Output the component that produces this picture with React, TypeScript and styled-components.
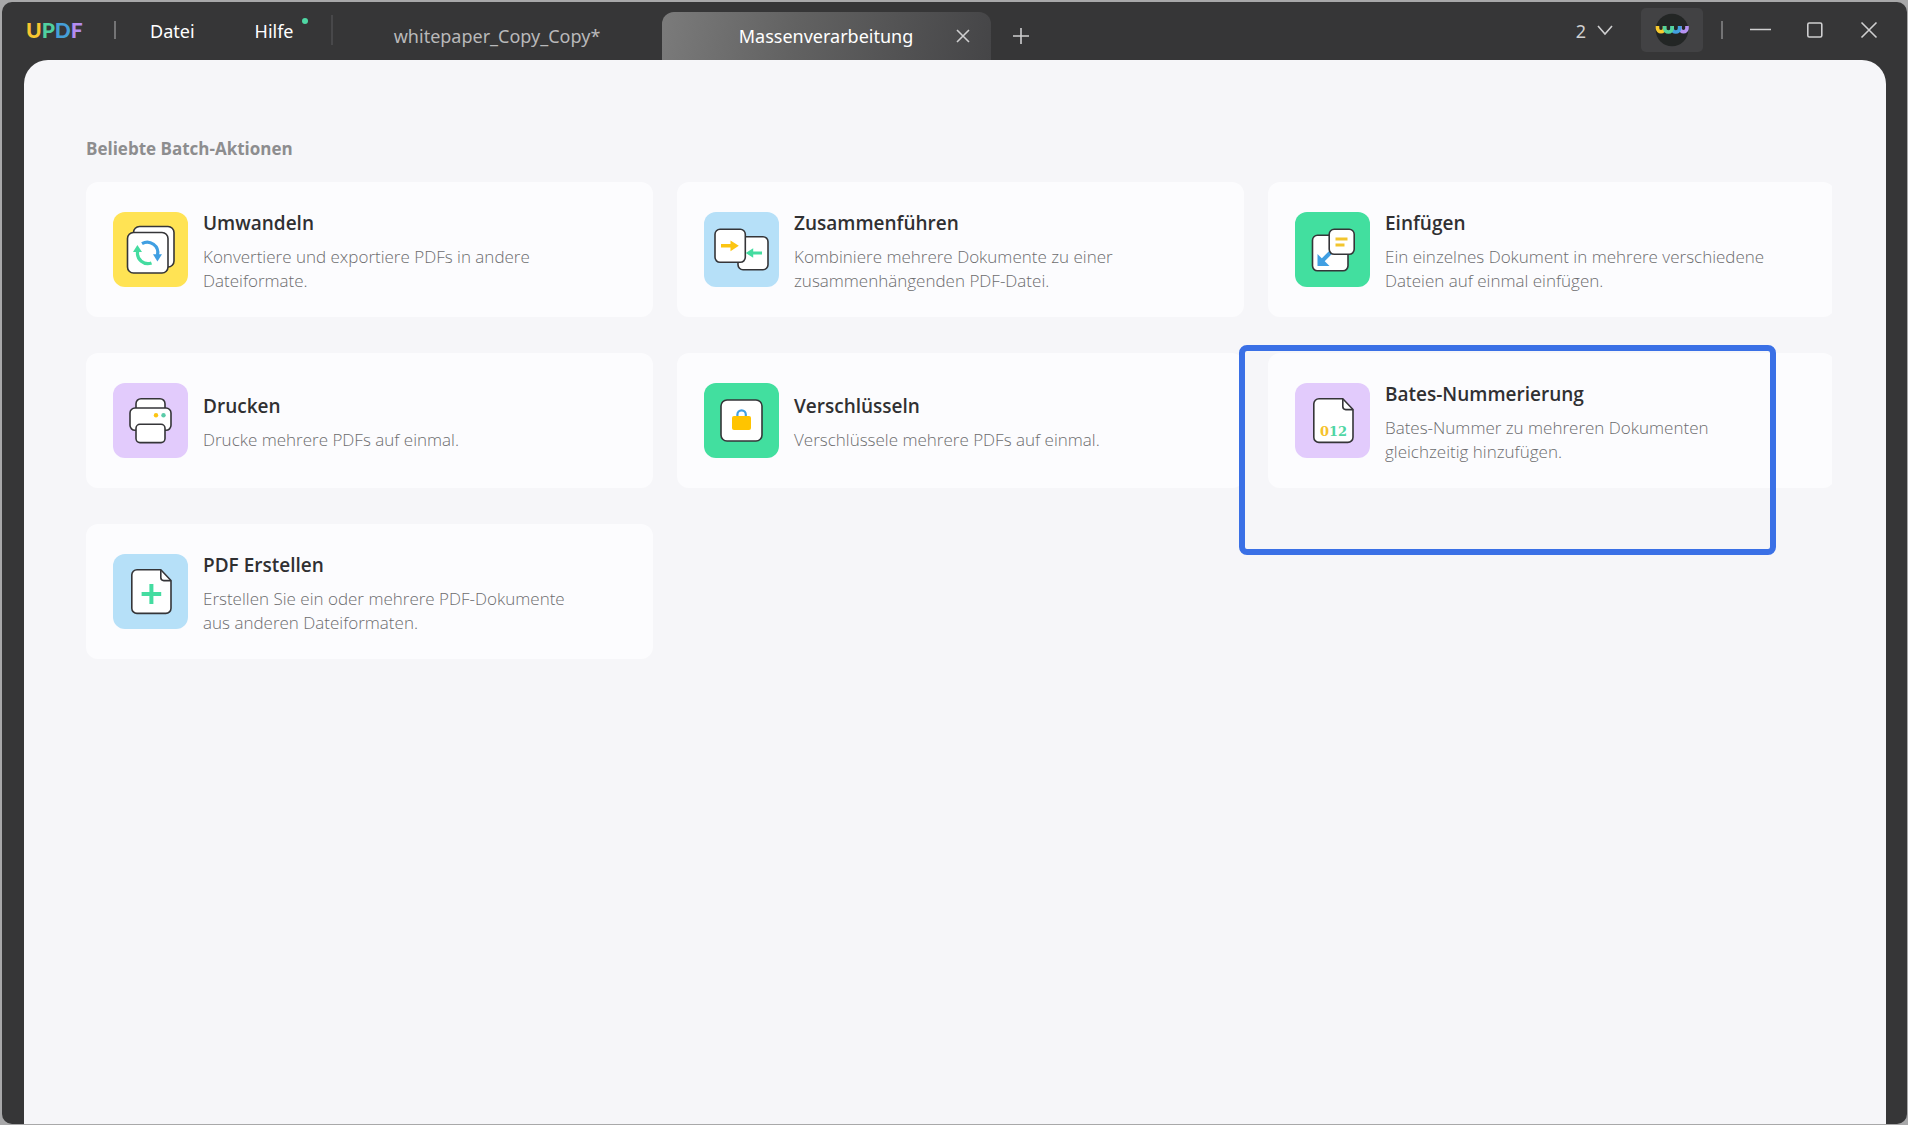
import React from "react";
import styled, { createGlobalStyle } from "styled-components";

const ink = "#353538";
const yellow = "#fcc512";
const green = "#44dca0";
const blue = "#409fe2";

const GlobalStyle = createGlobalStyle`
  *, *::before, *::after { box-sizing: border-box; }
  html, body, #root { height: 100%; }
  body {
    margin: 0;
    background: #a8a8a9;
    font-family: "Open Sans", "Noto Sans", sans-serif;
    overflow: hidden;
  }
  button { font: inherit; color: inherit; border: 0; background: none; padding: 0; cursor: pointer; }
  svg { display: block; }
`;

const Desktop = styled.div`
  height: 100%;
  padding: 2px 1px 1px 2px;
`;

const Window = styled.div`
  height: 100%;
  display: flex;
  flex-direction: column;
  background: #363637;
  border-radius: 10px;
  overflow: hidden;
`;

const TitleBar = styled.header`
  height: 58px;
  flex: none;
  display: flex;
  align-items: stretch;
  justify-content: space-between;
  color: #fff;
  font-family: "Noto Sans", "Open Sans", sans-serif;
`;

const BarGroup = styled.div`
  display: flex;
  align-items: stretch;
`;

const Logo = styled.div`
  width: 112px;
  padding-left: 24px;
  font: 900 21px/56px Lato, sans-serif;
`;

const LogoLetter = styled.span<{ $color: string }>`
  color: ${(p) => p.$color};
`;

const Divider = styled.span<{ $height: number; $color: string }>`
  width: 2px;
  height: ${(p) => p.$height}px;
  margin-top: ${(p) => (56 - p.$height) / 2}px;
  background: ${(p) => p.$color};
`;

const Menu = styled.nav`
  display: flex;
  padding: 0 37px 0 34px;
  gap: 60px;
`;

const MenuItem = styled.button`
  position: relative;
  height: 58px;
  font-size: 18px;
  line-height: 24px;
`;

const NewDot = styled.span`
  position: absolute;
  top: 16px;
  right: -14px;
  width: 6px;
  height: 6px;
  border-radius: 50%;
  background: #4fd8a4;
`;

const Tabs = styled.div`
  display: flex;
  align-items: flex-end;
`;

const Tab = styled.div<{ $active?: boolean }>`
  width: 329px;
  height: 48px;
  display: flex;
  align-items: center;
  justify-content: center;
  position: relative;
  border-radius: 12px 12px 0 0;
  background: ${(p) => (p.$active ? "linear-gradient(100deg, #7b7b7b, #626262 40%, #454547)" : "none")};
  color: ${(p) => (p.$active ? "#fff" : "#b9b9ba")};
`;

const TabLabel = styled.button`
  font-size: 18px;
  line-height: 24px;
`;

const TabClose = styled.button`
  position: absolute;
  right: 20px;
  top: 16px;
`;

const NewTab = styled.button`
  width: 60px;
  height: 48px;
  display: grid;
  place-items: center;
`;

const CountButton = styled.button`
  display: flex;
  align-items: center;
  gap: 11px;
  margin-right: 28px;
  font-size: 18px;
  color: #d0d0d1;
`;

const AccountButton = styled.button`
  width: 62px;
  height: 44px;
  margin: 6px 18px 0 0;
  display: grid;
  place-items: center;
  border-radius: 5px;
  background: #424244;
`;

const WindowButtons = styled.div`
  display: flex;
  align-items: center;
  padding: 0 11px 2px;
`;

const WindowButton = styled.button`
  width: 54px;
  height: 40px;
  display: grid;
  place-items: center;
`;

const Content = styled.main`
  flex: 1;
  min-height: 0;
  margin: 0 21px 0 22px;
  padding: 77px 54px 0 62px;
  background: #f6f6f9;
  border-radius: 24px 24px 0 0;
  overflow: hidden;
`;

const SectionTitle = styled.h1`
  margin: 0 0 21px;
  font-size: 17px;
  line-height: 24px;
  font-weight: 700;
  color: #8d8d8f;
`;

const GridViewport = styled.div`
  overflow-x: clip;
`;

const CardGrid = styled.div`
  display: grid;
  grid-template-columns: repeat(3, minmax(0, 1fr));
  gap: 36px 24px;
  margin-right: -3px;
`;

const CardCell = styled.div`
  position: relative;
`;

const Card = styled.button`
  width: 100%;
  min-height: 135px;
  display: flex;
  align-items: center;
  gap: 15px;
  padding: 0 60px 0 27px;
  border-radius: 12px;
  background: #fcfcfe;
  text-align: left;
`;

const IconTile = styled.span<{ $color: string }>`
  flex: none;
  width: 75px;
  height: 75px;
  border-radius: 12px;
  background: ${(p) => p.$color};
`;

const CardText = styled.span`
  display: flex;
  flex-direction: column;
  gap: 10px;
  padding-top: 4px;
`;

const CardTitle = styled.span`
  font-size: 19px;
  line-height: 24px;
  font-weight: 600;
  color: #303032;
`;

const CardDescription = styled.span`
  font-size: 17px;
  line-height: 24px;
  font-weight: 300;
  color: #6c6c6e;
`;

const Highlight = styled.span`
  position: absolute;
  left: -29px;
  top: -8px;
  width: calc(100% - 30px);
  height: 210px;
  border: 6px solid #3a70e6;
  border-radius: 8px;
  pointer-events: none;
`;

const sheet = { fill: "#fff", stroke: ink, strokeWidth: 1.6 };

const Art = ({ children }: { children: React.ReactNode }) => (
  <svg width="75" height="75" viewBox="0 0 75 75" aria-hidden="true">{children}</svg>
);

const ConvertIcon = () => (
  <Art>
    <rect x="20.5" y="14.5" width="40.5" height="40.5" rx="6" {...sheet} />
    <rect x="14.5" y="20.5" width="40.5" height="40.5" rx="6" {...sheet} />
    <path d="M29 31.6A10.5 10.5 0 0 1 44.5 43" fill="none" stroke={blue} strokeWidth="3.2" />
    <path d="M40 42.2h9L44.4 49.5z" fill={blue} />
    <path d="M24.6 39.5A10.5 10.5 0 0 0 38.5 51" fill="none" stroke={green} strokeWidth="3.2" />
    <path d="M20 40h9L24.4 33z" fill={green} />
  </Art>
);

const MergeIcon = () => (
  <Art>
    <rect x="34" y="24.7" width="30" height="33" rx="5" {...sheet} />
    <rect x="11" y="17.3" width="30.3" height="33" rx="5" {...sheet} />
    <path d="M17 32h9.5v-3.6l8.3 5.4-8.3 5.4v-3.6H17z" fill={yellow} />
    <path d="M58 39.4h-8.8v-3.2L41.7 41l7.5 4.8v-3.2H58z" fill={green} />
  </Art>
);

const InsertIcon = () => (
  <Art>
    <rect x="17.5" y="23.3" width="35.5" height="35.5" rx="5" {...sheet} />
    <path d="M37 39L26 50" stroke={blue} strokeWidth="4" />
    <path d="M22.5 42v12h12z" fill={blue} />
    <rect x="34.2" y="17.3" width="25" height="25" rx="5" {...sheet} />
    <path d="M40.5 27h12M40.5 33h9" stroke="#f2c52e" strokeWidth="3" />
  </Art>
);

const PrintIcon = () => (
  <Art>
    <rect x="23" y="15.7" width="29" height="18" rx="5" {...sheet} />
    <rect x="17" y="25" width="41" height="22.3" rx="5" {...sheet} />
    <rect x="23" y="41.3" width="29" height="18.3" rx="4" {...sheet} />
    <circle cx="43" cy="32.3" r="2.2" fill={yellow} />
    <circle cx="50.5" cy="32.3" r="2.2" fill="#5acba8" />
  </Art>
);

const EncryptIcon = () => (
  <Art>
    <rect x="17" y="17" width="41" height="41" rx="6" {...sheet} />
    <path d="M33.4 34v-2.4a4.2 4.2 0 0 1 8.4 0V34" fill="none" stroke={blue} strokeWidth="2.2" />
    <rect x="28" y="33" width="19" height="14" rx="2" fill="#ffc400" />
  </Art>
);

const Page = () => (
  <>
    <path d="M24 15.7h23.8L58 26.5v27.7a5.2 5.2 0 0 1-5.2 5.2H24a5.2 5.2 0 0 1-5.2-5.2V20.9a5.2 5.2 0 0 1 5.2-5.2z" {...sheet} />
    <path d="M47.8 16v7.6a3 3 0 0 0 3 3H58" fill="none" stroke={ink} strokeWidth="1.6" />
  </>
);

const BatesIcon = () => (
  <Art>
    <Page />
    <text x="25" y="53" fontFamily="'DejaVu Serif', serif" fontWeight="700" fontSize="13" fill="#f6c22c">
      0<tspan fill="#4fd6a4">12</tspan>
    </text>
  </Art>
);

const CreateIcon = () => (
  <Art>
    <Page />
    <path d="M38.4 30v20M28.6 40h19.6" stroke={green} strokeWidth="4" />
  </Art>
);

const cards = [
  { title: "Umwandeln", text: "Konvertiere und exportiere PDFs in andere Dateiformate.", color: "#ffe354", Icon: ConvertIcon },
  { title: "Zusammenführen", text: "Kombiniere mehrere Dokumente zu einer zusammenhängenden PDF-Datei.", color: "#b6e0f8", Icon: MergeIcon },
  { title: "Einfügen", text: "Ein einzelnes Dokument in mehrere verschiedene Dateien auf einmal einfügen.", color: "#42df9f", Icon: InsertIcon },
  { title: "Drucken", text: "Drucke mehrere PDFs auf einmal.", color: "#e2cbfc", Icon: PrintIcon },
  { title: "Verschlüsseln", text: "Verschlüssele mehrere PDFs auf einmal.", color: "#42df9f", Icon: EncryptIcon },
  { title: "Bates-Nummerierung", text: "Bates-Nummer zu mehreren Dokumenten gleichzeitig hinzufügen.", color: "#e2cbfc", Icon: BatesIcon, highlighted: true },
  { title: "PDF Erstellen", text: "Erstellen Sie ein oder mehrere PDF-Dokumente aus anderen Dateiformaten.", color: "#b6e0f8", Icon: CreateIcon },
];

const line = { fill: "none", stroke: "#cfcfd0", strokeWidth: 1.6 };

export default function App() {
  return (
    <Desktop>
      <GlobalStyle />
      <Window>
        <TitleBar>
          <BarGroup>
            <Logo>
              <LogoLetter $color="#f8c630">U</LogoLetter>
              <LogoLetter $color="#50d0a0">P</LogoLetter>
              <LogoLetter $color="#459fd8">D</LogoLetter>
              <LogoLetter $color="#b48cf0">F</LogoLetter>
            </Logo>
            <BarGroup>
              <Divider $height={18} $color="#747475" />
              <Menu>
                <MenuItem>Datei</MenuItem>
                <MenuItem>Hilfe<NewDot /></MenuItem>
              </Menu>
              <Divider $height={30} $color="#48484a" />
            </BarGroup>
            <Tabs>
              <Tab><TabLabel>whitepaper_Copy_Copy*</TabLabel></Tab>
              <Tab $active>
                <TabLabel>Massenverarbeitung</TabLabel>
                <TabClose aria-label="Tab schließen">
                  <svg width="16" height="16" viewBox="0 0 16 16"><path d="M2 2l12 12M14 2L2 14" {...line} /></svg>
                </TabClose>
              </Tab>
              <NewTab aria-label="Neuer Tab">
                <svg width="18" height="18" viewBox="0 0 18 18"><path d="M9 1v16M1 9h16" {...line} /></svg>
              </NewTab>
            </Tabs>
          </BarGroup>
          <BarGroup>
            <CountButton>
              2
              <svg width="16" height="12" viewBox="0 0 16 12"><path d="M1 1l7 8 7-8" {...line} /></svg>
            </CountButton>
            <AccountButton aria-label="Konto">
              <svg width="34" height="34" viewBox="0 0 34 34">
                <circle cx="17" cy="17" r="16.3" fill="#232625" />
                <g fill="none" strokeWidth="3.6">
                  <path d="M2.5 13v2.2a3.4 3.4 0 0 0 7 0V13" stroke="#f8ca2e" />
                  <path d="M25 13v2.2a3.4 3.4 0 0 0 7 0V13" stroke="#b692f2" />
                  <path d="M17 13v2.2a3.8 3.8 0 0 0 7.6 0V13" stroke="#42a0e0" />
                  <path d="M9.6 13v2.2a3.8 3.8 0 0 0 7.6 0V13" stroke="#54d49c" />
                </g>
              </svg>
            </AccountButton>
            <Divider $height={18} $color="#747475" />
            <WindowButtons>
              <WindowButton aria-label="Minimieren">
                <svg width="22" height="18" viewBox="0 0 22 18"><path d="M0 8.5h21" {...line} /></svg>
              </WindowButton>
              <WindowButton aria-label="Maximieren">
                <svg width="18" height="18" viewBox="0 0 18 18"><rect x="1.8" y="2" width="14" height="14" rx="1.5" {...line} /></svg>
              </WindowButton>
              <WindowButton aria-label="Schließen">
                <svg width="18" height="18" viewBox="0 0 18 18"><path d="M1.5 1.5l15 15M16.5 1.5l-15 15" {...line} /></svg>
              </WindowButton>
            </WindowButtons>
          </BarGroup>
        </TitleBar>
        <Content>
          <SectionTitle>Beliebte Batch-Aktionen</SectionTitle>
          <GridViewport>
            <CardGrid>
              {cards.map(({ title, text, color, Icon, highlighted }) => (
                <CardCell key={title}>
                  <Card>
                    <IconTile $color={color}><Icon /></IconTile>
                    <CardText>
                      <CardTitle>{title}</CardTitle>
                      <CardDescription>{text}</CardDescription>
                    </CardText>
                  </Card>
                  {highlighted && <Highlight />}
                </CardCell>
              ))}
            </CardGrid>
          </GridViewport>
        </Content>
      </Window>
    </Desktop>
  );
}
